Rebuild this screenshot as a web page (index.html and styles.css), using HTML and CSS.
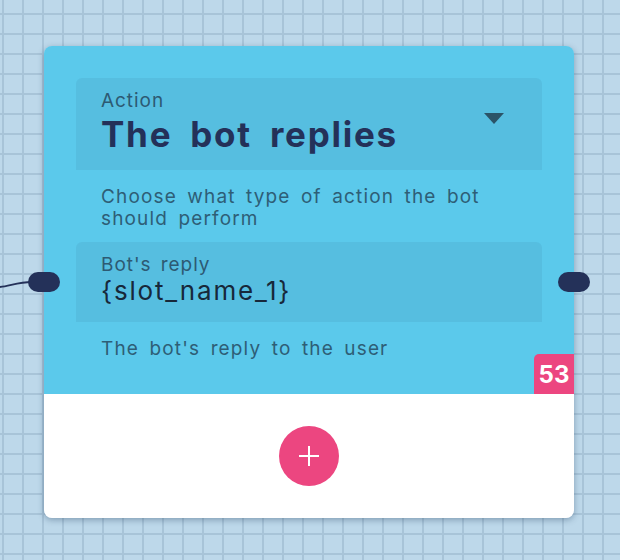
FILE: index.html
```html
<!DOCTYPE html>
<html lang="en">
<head>
    <meta charset="UTF-8">
    <meta name="viewport" content="width=device-width, initial-scale=1.0">
    <title>Flow node</title>
    <link rel="stylesheet" href="styles.css">
</head>
<body>
    <svg class="edge" width="40" height="300" viewBox="0 0 40 300">
        <path d="M0 287 C 10 286, 18 282, 32 282" fill="none" stroke="#243159" stroke-width="2"/>
    </svg>
    <div class="node">
        <span class="port port-in"></span>
        <span class="port port-out"></span>
        <div class="node-body">
            <div class="field select">
                <div class="field-text">
                    <div class="field-label">Action</div>
                    <div class="field-value title">The bot replies</div>
                </div>
                <span class="caret"></span>
            </div>
            <p class="hint">Choose what type of action the bot should perform</p>
            <div class="field reply">
                <div class="field-text">
                    <div class="field-label">Bot's reply</div>
                    <div class="field-value">{slot_name_1}</div>
                </div>
            </div>
            <p class="hint last">The bot's reply to the user</p>
            <span class="badge">53</span>
        </div>
        <div class="node-footer">
            <button class="add">
                <svg width="20" height="20" viewBox="0 0 20 20">
                    <path d="M10 0 V20 M0 10 H20" stroke="#fff" stroke-width="2"/>
                </svg>
            </button>
        </div>
    </div>
</body>
</html>
```

FILE: styles.css
```css
body
{
    margin: 0;
    height: 560px;
    padding: 46px 0 0 44px;
    box-sizing: border-box;
    font-family: Inter, "Noto Sans", sans-serif;
    background-color: #bdd8ea;
    background-image:
        linear-gradient(to right, #a8c4d8 2px, transparent 2px),
        linear-gradient(to bottom, #a8c4d8 2px, transparent 2px);
    background-size: 20px 20px;
    background-position: 2px 13px;
    position: relative;
}
.edge
{
    position: absolute;
    left: 0;
    top: 0;
}
.node
{
    position: relative;
    width: 530px;
    border-radius: 8px;
    box-shadow: 0px 2px 6px rgba(20, 50, 80, 0.35);
}
.port
{
    position: absolute;
    top: 226px;
    width: 32px;
    height: 20px;
    border-radius: 10px;
    background-color: #243159;
    z-index: 2;
}
.port-in
{
    left: -16px;
}
.port-out
{
    right: -16px;
}
.node-body
{
    position: relative;
    height: 348px;
    box-sizing: border-box;
    padding: 32px 32px 0;
    background-color: #5bc9eb;
    border-radius: 8px 8px 0 0;
}
.field
{
    display: flex;
    justify-content: space-between;
    padding: 12px 24px 0 25px;
    background-color: #56bee0;
    border-radius: 6px 6px 0 0;
    box-sizing: border-box;
}
.select
{
    height: 92px;
}
.reply
{
    height: 80px;
    margin-top: 13px;
}
.field-label
{
    font-size: 19px;
    line-height: 22px;
    color: #2d5a73;
    letter-spacing: 0.05em;
    word-spacing: 3px;
}
.field-value
{
    font-size: 26px;
    line-height: 30px;
    color: #17283a;
    letter-spacing: 0.07em;
}
.title
{
    margin-top: 3px;
    font-size: 35px;
    line-height: 38px;
    font-weight: 700;
    color: #243159;
    letter-spacing: 0.05em;
    word-spacing: 8px;
}
.caret
{
    margin: 23px 14px 0 0;
    width: 0;
    height: 0;
    border-left: 10px solid transparent;
    border-right: 10px solid transparent;
    border-top: 11px solid #2b5468;
}
.hint
{
    margin: 16px 0 0;
    padding: 0 25px;
    font-size: 19px;
    line-height: 21.5px;
    color: #2e5e76;
    letter-spacing: 0.06em;
    word-spacing: 4px;
}
.hint.last
{
    margin-top: 16px;
}
.badge
{
    position: absolute;
    right: 0;
    bottom: 0;
    width: 40px;
    height: 40px;
    display: flex;
    align-items: center;
    justify-content: center;
    background-color: #ec4680;
    color: white;
    font-size: 24px;
    font-weight: 700;
    border-radius: 5px 0 0 0;
}
.node-footer
{
    height: 124px;
    display: flex;
    align-items: center;
    justify-content: center;
    background-color: white;
    border-radius: 0 0 8px 8px;
}
.add
{
    width: 60px;
    height: 60px;
    border: none;
    border-radius: 50%;
    background-color: #ec4680;
    display: flex;
    align-items: center;
    justify-content: center;
    padding: 0;
    cursor: pointer;
}
```
